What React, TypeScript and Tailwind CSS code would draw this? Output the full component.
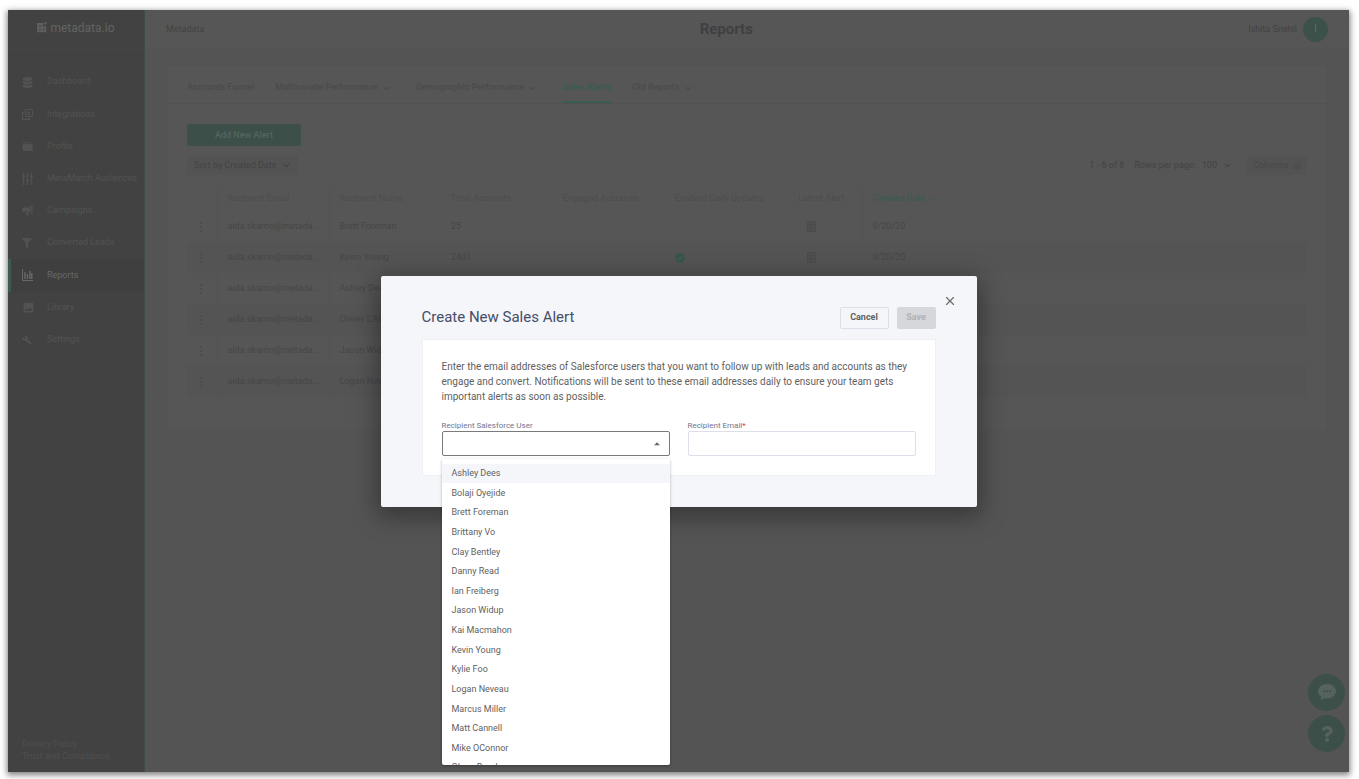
import { ReactNode, useState } from 'react'
import { FaCheckCircle, FaDatabase, FaFilter, FaQuestion } from 'react-icons/fa'
import { MdArrowDropUp, MdBuild, MdImage } from 'react-icons/md'
import { ChevronDown, ChevronLeft, X } from 'lucide-react'

interface inav {
  label: string;
  icon: ReactNode;
}

const IntegrationsIcon = () => (
  <svg viewBox="0 0 11 11" className="size-[11px]" fill="none" stroke="currentColor">
    <path d="M3.5 .5h7v7h-7z" />
    <path d="M2.5 3.5h-2v7h7v-2" strokeWidth="1.4" />
    <path d="M5.500 3.500h2v2h-2z" />
  </svg>
)

const ProfileIcon = () => (
  <svg viewBox="0 0 11 11" className="size-[11px]" fill="currentColor">
    <path d="M1.500 1h3.500l.6.600H9.500a.8.8 0 0 1 .8.800H.7V1.800A.8.8 0 0 1 1.500 1z" opacity=".7" />
    <path d="M.5 3h10v6a1 1 0 0 1-1 1h-8a1 1 0 0 1-1-1z" />
  </svg>
)

const AudiencesIcon = () => (
  <svg viewBox="0 0 11 12" className="h-3 w-[11px]" fill="none" stroke="currentColor">
    <path d="M1.500 0v12M5.500 0v12M9.500 0v12" strokeWidth="1.400" />
    <path d="M0 3.500h3M4 7.500h3M8 3.500h3" strokeWidth="1.400" />
  </svg>
)

const CampaignsIcon = () => (
  <svg viewBox="0 0 11 12" className="h-3 w-[11px]" fill="currentColor">
    <path d="M8 1.500v6.200L5.500 6.800H1A1 1 0 0 1 0 5.800V3.500a1 1 0 0 1 1-1h4.500z" />
    <path d="M8.800 0h1.700v8.800H8.800zM3.800 7.400h2.700v3.200H4.800z" />
  </svg>
)

const ReportsIcon = () => (
  <svg viewBox="0 0 11 12" className="h-3 w-[11px]" fill="none" stroke="currentColor">
    <path d="M.5 0v11.500H11" />
    <path d="M3 10V3M5.500 10V5M8 10V2M9.800 10V4" strokeWidth="1.400" />
  </svg>
)

const LogoMark = () => (
  <svg viewBox="0 0 10 11" className="h-[11px] w-[10px]" fill="currentColor">
    <path d="M0 1h2.800v2.800H0zM3.200 1H6v2.800H3.200zM7.200 .3h2.200v2.200H7.200zM0 4.200h2.800V7H0zM3.200 4.200H6V7H3.200zM6.400 4.200h2.800V7H6.400zM0 7.400h2.800v2.800H0zM3.200 7.400H6v2.800H3.200zM6.400 7.400h2.800v2.800H6.400z" />
  </svg>
)

const DocIcon = () => (
  <svg viewBox="0 0 9 11" className="h-[11px] w-[9px]" fill="none" stroke="currentColor">
    <rect x=".5" y=".5" width="8" height="10" rx="1" fill="#505050" />
    <path d="M2 3.500h5M2 5.500h5M2 7.500h3" />
  </svg>
)

const ChatIcon = () => (
  <svg viewBox="0 0 18 17" className="h-[17px] w-[18px]">
    <path d="M9 0C4 0 0 3.200 0 7.200c0 2.300 1.300 4.300 3.300 5.600L2.800 16.600l4-2.400c.7.200 1.400.200 2.200.200 5 0 9-3.200 9-7.200S14 0 9 0z" fill="#56625e" />
    <path d="M5 6.500h2v1.600H5zM8 6.500h2v1.600H8zM11 6.500h2v1.600h-2z" fill="#3c4f49" />
  </svg>
)

const nav: inav[] = [
  { label: 'Dashboard', icon: <FaDatabase size={11} /> },
  { label: 'Integrations', icon: <IntegrationsIcon /> },
  { label: 'Profile', icon: <ProfileIcon /> },
  { label: 'MetaMatch Audiences', icon: <AudiencesIcon /> },
  { label: 'Campaigns', icon: <CampaignsIcon /> },
  { label: 'Converted Leads', icon: <FaFilter size={10} /> },
  { label: 'Reports', icon: <ReportsIcon /> },
  { label: 'Library', icon: <MdImage size={13} /> },
  { label: 'Settings', icon: <MdBuild size={10} /> },
]

const tabs = [
  { label: 'Accounts Funnel', menu: false },
  { label: 'Multivariate Performance', menu: true },
  { label: 'Demographic Performance', menu: true },
  { label: 'Sales Alerts', menu: false },
  { label: 'Old Reports', menu: true },
]

const rows = [
  { name: 'Brett Foreman', total: '25', daily: false },
  { name: 'Kevin Young', total: '2401', daily: true },
  { name: 'Ashley Dees', total: '', daily: false },
  { name: "Olivier L'Abbe", total: '', daily: false },
  { name: 'Jason Widup', total: '', daily: false },
  { name: 'Logan Neveau', total: '', daily: false },
]

const users = [
  'Ashley Dees', 'Bolaji Oyejide', 'Brett Foreman', 'Brittany Vo', 'Clay Bentley', 'Danny Read',
  'Ian Freiberg', 'Jason Widup', 'Kai Macmahon', 'Kevin Young', 'Kylie Foo', 'Logan Neveau',
  'Marcus Miller', 'Matt Cannell', 'Mike OConnor', 'Olena Bomko',
]

function Sidebar() {
  return (
    <aside className="flex w-[137px] shrink-0 flex-col border-r border-[#3d4d48] bg-[#424242] text-[#525252]">
      <div className="flex h-10 items-center justify-center gap-[3px] border-b border-[#464646] pb-1 text-[#626262]">
        <LogoMark />
        <span className="text-[12px]">metadata.io</span>
      </div>
      <nav className="mt-4 grid h-[290px] auto-rows-fr text-[9px]">
        {nav.map(n =>
          <a
            key={n.label}
            href="#"
            className={n.label === 'Reports'
              ? 'flex items-center border-l-[3px] border-[#3c5a50] bg-[#3f3f3f] pl-[11px] text-[#686868]'
              : 'flex items-center border-l-[3px] border-transparent pl-[11px]'}
          >
            <span className="flex w-[25px] shrink-0 items-center">{n.icon}</span>
            <span className="whitespace-nowrap">{n.label}</span>
          </a>
        )}
      </nav>
      <div className="mt-auto flex flex-col pb-[10px] pl-[14px] text-[9px] leading-[12px] text-[#4f4f4f]">
        <a href="#">Privacy Policy</a>
        <a href="#">Trust and Compliance</a>
      </div>
    </aside>
  )
}

function AlertsTable() {
  const line = 'border-r border-[#535353]'
  const head = 'pl-[10px] text-left font-normal'

  return (
    <table className="mt-[11px] w-full table-fixed text-[9px] font-normal text-[#464646]">
      <thead>
        <tr className="h-[25px] text-[#4d4d4d]">
          <th className={`w-[30px] ${line}`}></th>
          <th className={`w-[112px] ${head} ${line}`}>Recipient Email</th>
          <th className={`w-[112px] ${head}`}>Recipient Name</th>
          <th className={`w-[112px] ${head}`}>Total Accounts</th>
          <th className={`w-[112px] ${head}`}>Engaged Accounts</th>
          <th className={`w-[123px] whitespace-nowrap ${head}`}>Enabled Daily Updates</th>
          <th className={`w-[74px] ${head} ${line}`}>Latest Alert</th>
          <th className="pl-[10px] text-left font-medium text-[#3b5c50]">
            <button className="flex items-center gap-1">Created Date <ChevronDown size={8} strokeWidth={3} /></button>
          </th>
        </tr>
      </thead>
      <tbody>
        {rows.map(r =>
          <tr key={r.name} className="h-[31px] even:bg-[#545454]">
            <td className={`pl-[12px] text-[#4d4d4d] ${line}`}>
              <svg viewBox="0 0 4 12" className="h-3 w-1" fill="currentColor">
                <path d="M1 1h2v2H1zM1 5h2v2H1zM1 9h2v2H1z" />
              </svg>
            </td>
            <td className={`pl-[10px] ${line}`}>aida.skamo@metada...</td>
            <td className="pl-[10px] whitespace-nowrap">{r.name}</td>
            <td className="pl-[10px]">{r.total}</td>
            <td></td>
            <td className="pl-[10px] text-[#34574b]">{r.daily && <FaCheckCircle size={10} />}</td>
            <td className={`pl-[19px] text-[#4a4a4a] ${line}`}><DocIcon /></td>
            <td className="pl-[10px]">9/20/20</td>
          </tr>
        )}
      </tbody>
    </table>
  )
}

function AlertDialog() {
  const [user, setUser] = useState('')
  const label = 'block h-3 pt-px text-[8px] leading-[12px] font-normal text-[#6f7590]'

  return (
    <div role="dialog" aria-labelledby="dialog-title" className="relative w-[596px] rounded-[2px] bg-[#f5f6fa] px-[41px] pt-[31px] pb-[31px] text-[#5f5f5f] shadow-[0_6px_24px_4px_rgba(0,0,0,0.35)]">
      <button aria-label="Close" className="absolute top-[18px] right-5 text-[#6b6b6b]">
        <X size={14} strokeWidth={2} />
      </button>
      <div className="flex h-[22px] items-center gap-2">
        <h2 id="dialog-title" className="mr-auto text-[15px] text-[#454d68]">Create New Sales Alert</h2>
        <button className="h-[22px] w-[49px] rounded-[2px] border border-[#dcdfe9] text-[9px] font-bold">Cancel</button>
        <button className="h-[22px] w-[39px] rounded-[2px] bg-[#d6d7da] text-[9px] font-bold text-[#b0b1b5]">Save</button>
      </div>

      <div className="mt-[10px] border border-[#eef0f5] bg-white p-[19px]">
        <p className="text-[10px] leading-[15px]">
          Enter the email addresses of Salesforce users that you want to follow up with leads and accounts as they
          <br />
          engage and convert. Notifications will be sent to these email addresses daily to ensure your team gets
          <br />
          important alerts as soon as possible.
        </p>
        <div className="mt-[15px] grid grid-cols-2 gap-[18px]">
          <div className="relative">
            <label htmlFor="user" className={label}>Recipient Salesforce User</label>
            <select
              id="user"
              value={user}
              onChange={e => setUser(e.target.value)}
              className="block h-[25px] w-full appearance-none rounded-[2px] border border-[#7a7a7a] bg-white px-2 text-[9px]"
            >
              <option value=""></option>
              {users.map(u => <option key={u}>{u}</option>)}
            </select>
            <MdArrowDropUp size={14} className="pointer-events-none absolute right-[6px] bottom-[5px] text-[#666]" />
            <div className="absolute top-[40px] left-0 z-10 h-[306px] w-full overflow-hidden rounded-b-[2px] bg-white pt-[5px] shadow-[0_1px_3px_rgba(0,0,0,0.3)]">
              <ul role="listbox" className="grid h-[314px] auto-rows-fr text-[9px]">
                {users.map(u =>
                  <li
                    key={u}
                    role="option"
                    aria-selected={u === user}
                    onClick={() => setUser(u)}
                    className="flex cursor-pointer items-center px-[10px] pt-px first:bg-[#f5f6fa]"
                  >{u}</li>
                )}
              </ul>
            </div>
          </div>
          <div>
            <label htmlFor="email" className={label}>Recipient Email<span className="text-[#f0324b]">*</span></label>
            <input id="email" type="email" className="block h-[25px] w-full rounded-[2px] border border-[#dcdfe9] bg-white px-2 text-[9px]" />
          </div>
        </div>
      </div>
    </div>
  )
}

export default function App() {
  return (
    <div className="flex min-h-screen bg-white pt-[10px] pr-[10px] pb-[7px] pl-2 font-[Roboto,sans-serif]">
      <div className="relative flex flex-1 bg-[#545454] shadow-[0_2px_6px_1px_rgba(0,0,0,0.5)]">
        <Sidebar />

        <main className="relative min-w-0 flex-1">
          <header className="flex h-10 items-center justify-between border-b border-[#525252] bg-[#565656] pr-[21px] pl-[21px] text-[9px] text-[#434343]">
            <span>Metadata</span>
            <h1 className="text-[15px] font-bold text-[#3f4042]">Reports</h1>
            <div className="flex items-center gap-[6px]">
              <span>Ishita Snehil</span>
              <span className="flex size-[25px] items-center justify-center rounded-full bg-[#3c5149] text-[11px] text-[#5c6e67]">I</span>
            </div>
          </header>

          <button aria-label="Collapse menu" className="absolute top-[380px] left-px text-[#3f5f53]">
            <ChevronLeft size={11} />
          </button>

          <section className="mx-[21px] mt-[15px] border border-[#535353] bg-[#565656] pb-[34px]">
            <div className="flex h-[38px] items-stretch gap-[21px] border-b border-[#525252] px-5 text-[9px] font-medium text-[#4b4b4b]">
              {tabs.map(t =>
                <button
                  key={t.label}
                  className={t.label === 'Sales Alerts'
                    ? 'flex items-center border-b-2 border-[#3b5c50] pt-[9px] font-bold text-[#3b5c50]'
                    : 'flex items-center gap-1 border-b-2 border-transparent pt-[9px]'}
                >
                  {t.label}
                  {t.menu && <ChevronDown size={9} strokeWidth={3} className="mr-1" />}
                </button>
              )}
            </div>

            <div className="px-5 pt-5 text-[9px] text-[#434343]">
              <button className="block h-[22px] w-[114px] rounded-[2px] bg-[#3c4f49] pt-px font-medium text-[#53665f]">Add New Alert</button>
              <div className="mt-[10px] flex items-center">
                <button className="flex h-[19px] items-center gap-[6px] rounded-[2px] bg-[#535353] px-[7px]">
                  Sort by Created Date <ChevronDown size={9} strokeWidth={3} />
                </button>
                <span className="ml-auto">1 - 6 of 6</span>
                <span className="ml-[10px]">Rows per page:</span>
                <button className="ml-[6px] flex items-center gap-[6px]">100 <ChevronDown size={9} strokeWidth={3} /></button>
                <button className="ml-[15px] flex h-[19px] w-[60px] items-center justify-between rounded-[2px] bg-[#535353] px-[6px] text-[#474747]">
                  Columns <span className="size-2 rounded-full bg-[#4f4f4f]"></span>
                </button>
              </div>
              <AlertsTable />
            </div>
          </section>
        </main>

        <div className="absolute right-1 bottom-5 flex flex-col gap-1">
          <button aria-label="Chat" className="flex size-[37px] items-center justify-center rounded-full bg-[#3c4f49]">
            <ChatIcon />
          </button>
          <button aria-label="Help" className="flex size-[37px] items-center justify-center rounded-full bg-[#3c4f49] text-[#56625e]">
            <FaQuestion size={16} />
          </button>
        </div>

        <div className="absolute inset-0 flex items-center justify-center">
          <AlertDialog />
        </div>
      </div>
    </div>
  )
}
